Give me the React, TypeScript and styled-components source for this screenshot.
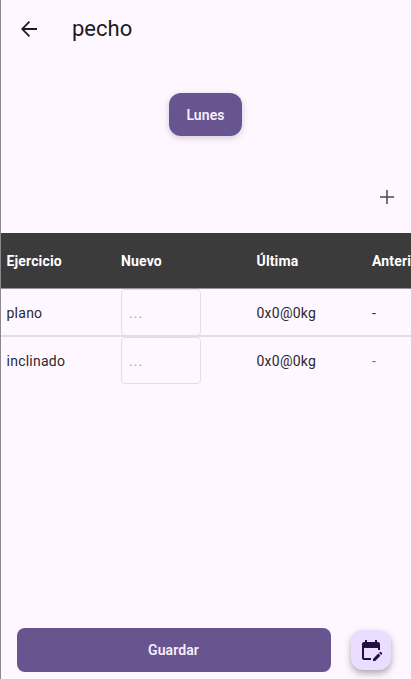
import React from "react";
import styled, { createGlobalStyle } from "styled-components";

const GlobalStyle = createGlobalStyle`
  * { box-sizing: border-box; }
  body { margin: 0; background: #fef7ff; overflow: hidden; }
`;

const Screen = styled.main`
  display: flex;
  flex-direction: column;
  width: 411px;
  height: 679px;
  overflow: hidden;
  border-left: 1px solid #8c898d;
  background: #fef7ff;
  color: #1d1b20;
  font-family: Roboto, "Liberation Sans", sans-serif;
`;

const AppBar = styled.header`
  display: flex;
  align-items: center;
  flex: none;
  height: 57px;
  padding-left: 15.5px;
  gap: 31.5px;
`;

const IconButton = styled.button`
  display: flex;
  flex: none;
  padding: 0;
  border: 0;
  background: none;
  color: inherit;
`;

const Title = styled.h1`
  margin: 0;
  font-size: 22px;
  line-height: 28px;
  font-weight: 400;
`;

const DayArea = styled.div`
  display: flex;
  justify-content: center;
  flex: none;
  height: 128px;
  padding: 36px 1px 0 0;
`;

const DayChip = styled.button`
  width: 73px;
  height: 43px;
  padding: 0;
  border: 0;
  border-radius: 12px;
  background: #68548e;
  color: #f6efff;
  font: 600 14px/20px Roboto, sans-serif;
  letter-spacing: 0.1px;
  box-shadow: 0 2px 6px rgba(60, 30, 100, 0.22);
`;

const AddRow = styled.div`
  display: flex;
  justify-content: flex-end;
  flex: none;
  height: 48px;
  padding-right: 12.5px;
  color: #49454f;
`;

const Table = styled.div`
  flex: 1;
  overflow: hidden;
`;

const Row = styled.div<{ $head?: boolean; $last?: boolean }>`
  display: grid;
  grid-template-columns: 114.5px 135.5px 115.5px 100px;
  align-items: center;
  width: 480px;
  height: ${(p) => (p.$head ? 56 : p.$last ? 47 : 48)}px;
  padding-left: 5.5px;
  border-bottom: ${(p) =>
    p.$last ? "0" : p.$head ? "1px solid #969297" : "1px solid #e4dde7"};
  background: ${(p) => (p.$head ? "#3b3b3b" : "transparent")};
  color: ${(p) => (p.$head ? "#ffffff" : "#2b292e")};
  font-size: 14px;
  line-height: 20px;
  font-weight: ${(p) => (p.$head ? 700 : 400)};
  letter-spacing: ${(p) => (p.$head ? 0.15 : 0.25)}px;
  box-shadow: ${(p) => (p.$last ? "none" : "inset 0 -1px 0 " + (p.$head ? "#3b3b3b" : "#e4dde7"))};
`;

const Cell = styled.span<{ $faint?: boolean }>`
  opacity: ${(p) => (p.$faint ? 0.65 : 1)};
`;

const SetInput = styled.input`
  width: 80px;
  height: 47px;
  padding: 0 7px;
  border: 1px solid #e2dce5;
  border-radius: 4px;
  outline: 0;
  background: transparent;
  font: 400 14px/20px Roboto, sans-serif;
  letter-spacing: 1px;
  &::placeholder { color: #a19ca5; opacity: 1; }
`;

const Footer = styled.footer`
  display: flex;
  flex: none;
  height: 51px;
  padding-left: 15.5px;
  gap: 20px;
`;

const SaveButton = styled.button`
  width: 314px;
  height: 44px;
  padding: 0;
  border: 0;
  border-radius: 8px;
  background: #68548e;
  color: #f6efff;
  font: 600 14px/20px Roboto, sans-serif;
  letter-spacing: 0.1px;
`;

const Fab = styled.button`
  display: flex;
  align-items: center;
  justify-content: center;
  width: 40px;
  height: 40px;
  margin-top: 2px;
  padding: 0;
  border: 0;
  border-radius: 12px;
  background: #ebddff;
  color: #230f46;
  box-shadow: 0 3px 5px rgba(0, 0, 0, 0.18), 0 4px 10px rgba(0, 0, 0, 0.16);
`;

const Icon = ({ d }: { d: string }) => (
  <svg width="24" height="24" viewBox="0 0 24 24" fill="currentColor" aria-hidden="true">
    <path d={d} />
  </svg>
);

const exercises = [
  { name: "plano", last: "0x0@0kg", previous: "-" },
  { name: "inclinado", last: "0x0@0kg", previous: "-" },
];

export default function App() {
  return (
    <>
      <GlobalStyle />
      <Screen>
        <AppBar>
          <IconButton aria-label="Volver">
            <Icon d="M20 11.1H7.4l5.7-5.8L11.8 4 4 12l7.8 8 1.3-1.3-5.7-5.8H20z" />
          </IconButton>
          <Title>pecho</Title>
        </AppBar>
        <DayArea>
          <DayChip>Lunes</DayChip>
        </DayArea>
        <AddRow>
          <IconButton aria-label="Añadir">
            <Icon d="M19 12.75h-6.25V19h-1.5v-6.25H5v-1.5h6.25V5h1.5v6.25H19z" />
          </IconButton>
        </AddRow>
        <Table>
          <Row $head>
            <Cell>Ejercicio</Cell>
            <Cell>Nuevo</Cell>
            <Cell>Última</Cell>
            <Cell>Anterior</Cell>
          </Row>
          {exercises.map((e, i) => (
            <Row key={e.name} $last={i === exercises.length - 1}>
              <Cell>{e.name}</Cell>
              <SetInput placeholder="..." />
              <Cell>{e.last}</Cell>
              <Cell $faint={i > 0}>{e.previous}</Cell>
            </Row>
          ))}
        </Table>
        <Footer>
          <SaveButton>Guardar</SaveButton>
          <Fab aria-label="Editar calendario">
            <Icon d="M12 22H5c-1.11 0-2-.9-2-2L3.01 6c0-1.1.88-2 1.99-2h1V2h2v2h8V2h2v2h1c1.1 0 2 .9 2 2v6h-2v-2H5v10h7v2zm10.13-5.01.71-.71a.996.996 0 0 0 0-1.41l-.71-.71a.996.996 0 0 0-1.41 0l-.71.71 2.12 2.12zm-.71.71-5.3 5.3H14v-2.12l5.3-5.3 2.12 2.12z" />
          </Fab>
        </Footer>
      </Screen>
    </>
  );
}
